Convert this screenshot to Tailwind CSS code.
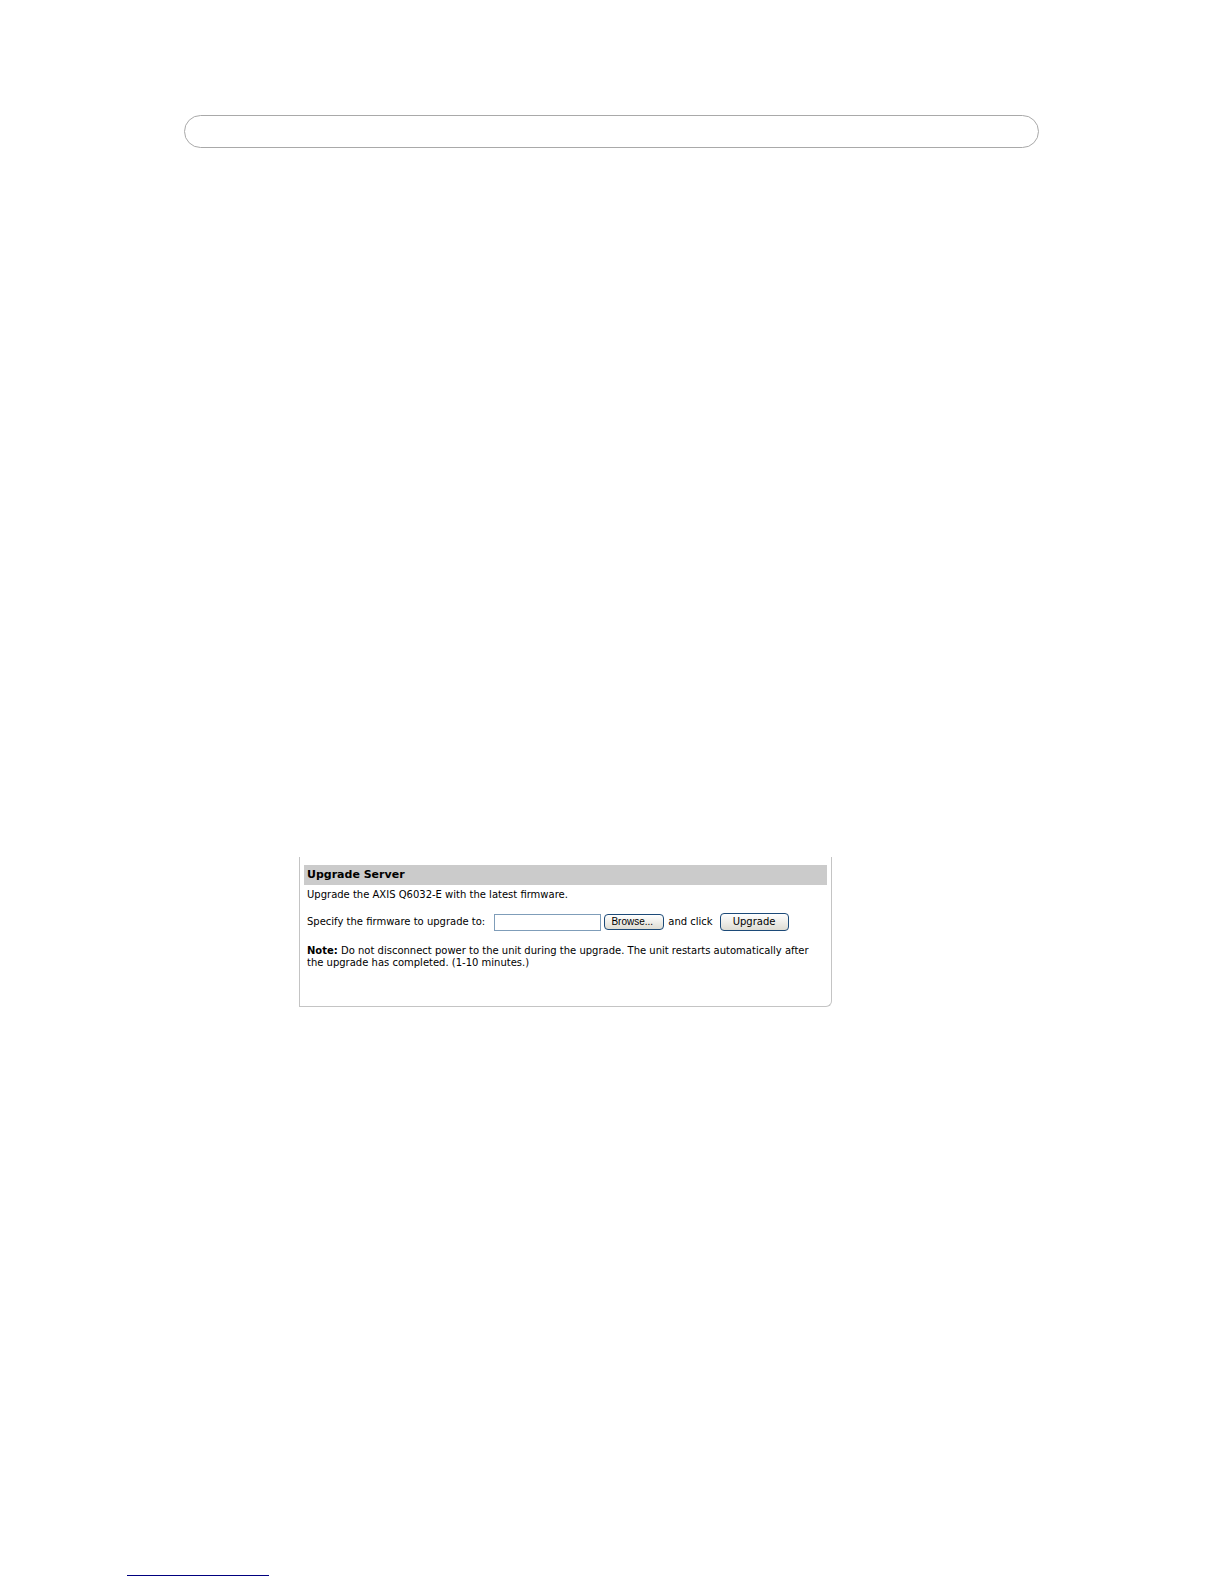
<!DOCTYPE html>
<html lang="en">
<head>
    <meta charset="UTF-8">
    <meta name="viewport" content="width=device-width, initial-scale=1.0">
    <title>Upgrade Server</title>
    <script src="https://cdn.jsdelivr.net/npm/@tailwindcss/browser@4"></script>
</head>
<body class="flex flex-col min-h-screen bg-white text-black font-['Verdana','DejaVu_Sans',sans-serif]">
    <!-- Page header frame -->
    <header class="ml-[184px] mr-[185px] mt-[115px] h-[33px] rounded-full border border-[#a9a9a9]"></header>

    <!-- Upgrade panel -->
    <main class="ml-[299px] mt-[709px] w-full max-w-[533px] border-x border-b border-[#c4c4c4] rounded-br-md px-1 pt-2 pb-[37px] text-[10px] leading-3">
        <h1 class="h-5 bg-[#cbcbcb] pl-[3px] text-[11px] leading-5 font-bold">Upgrade Server</h1>
        <p class="mt-1 pl-[3px]">Upgrade the AXIS Q6032-E with the latest firmware.</p>

        <form class="mt-3 pl-[3px] flex items-center h-[18px]">
            <label for="firmware" class="whitespace-nowrap">Specify the firmware to upgrade to:</label>
            <input id="firmware" type="text" class="ml-[9px] w-[107px] h-[17px] border border-[#7f9db9] bg-white px-1">
            <button type="button" class="ml-[3px] w-[60px] h-4 rounded-sm border border-[#1c4a78] bg-linear-to-b from-white to-[#dedcd3] pr-1 text-[10px] leading-3 font-['Liberation_Sans',sans-serif]">Browse...</button>
            <span class="ml-1 whitespace-nowrap">and click</span>
            <button type="submit" class="ml-[7px] w-[69px] h-[18px] rounded-sm border border-[#1c4a78] bg-linear-to-b from-white to-[#dedcd3]">Upgrade</button>
        </form>

        <p class="mt-[14px] pl-[3px]"><b>Note:</b> Do not disconnect power to the unit during the upgrade. The unit restarts automatically after the upgrade has completed. (1-10 minutes.)</p>
    </main>

    <!-- Footer rule -->
    <footer class="mt-auto mb-2 ml-[127px] w-[142px] border-b border-[#00007f]"></footer>
</body>
</html>
